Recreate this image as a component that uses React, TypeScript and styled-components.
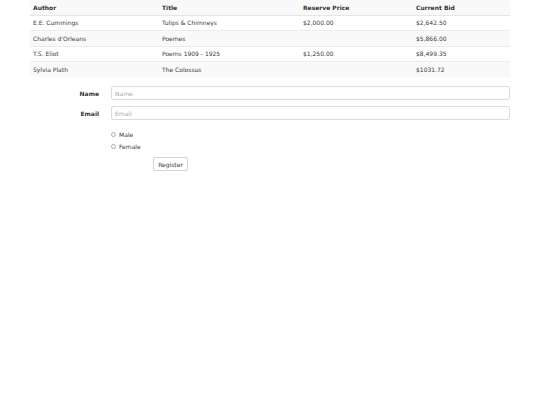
import React from "react";
import styled, { createGlobalStyle } from "styled-components";

const Global = createGlobalStyle`
  html, body { margin: 0; padding: 0; background: #fff; }
  body { font-family: "DejaVu Sans", Verdana, sans-serif; color: #333; font-size: 6px; }
`;

const Page = styled.div`
  padding: 0 30px;
  width: 480px;
`;

const Table = styled.table`
  width: 480px;
  border-collapse: collapse;
  table-layout: fixed;
`;

const Th = styled.th<{ $w: number }>`
  width: ${(p) => p.$w}px;
  text-align: left;
  font-weight: bold;
  padding: 0 3px;
  height: 15px;
  line-height: 9px;
  background: #f9f9f9;
  border-bottom: 1px solid #e6e6e6;
  box-sizing: border-box;
`;

const Tr = styled.tr<{ $striped: boolean }>`
  background: ${(p) => (p.$striped ? "#f9f9f9" : "#fff")};
`;

const Td = styled.td`
  padding: 0 3px;
  height: 15.5px;
  line-height: 9px;
  border-top: 1px solid #ececec;
  box-sizing: border-box;
  color: #3a3a3a;
`;

const Form = styled.div`
  margin-top: 9px;
  display: flex;
  flex-direction: column;
  gap: 6px;
`;

const Row = styled.div`
  display: grid;
  grid-template-columns: 69px 399px;
  column-gap: 12px;
  align-items: center;
`;

const Label = styled.label`
  text-align: right;
  font-weight: bold;
  color: #333;
`;

const Input = styled.input`
  box-sizing: border-box;
  height: 14px;
  width: 399px;
  border: 1px solid #dcdcdc;
  border-radius: 2px;
  padding: 0 3px;
  font-family: "DejaVu Sans", Verdana, sans-serif;
  font-size: 6px;
  outline: none;
  &::placeholder { color: #a8a8a8; }
`;

const Radios = styled.div`
  margin-left: 81px;
  margin-top: 4px;
  display: flex;
  flex-direction: column;
  gap: 3px;
`;

const RadioRow = styled.label`
  display: flex;
  align-items: center;
  gap: 3px;
  height: 9px;
  color: #3a3a3a;
`;

const Circle = styled.span`
  width: 5px;
  height: 5px;
  border: 0.8px solid #aaa;
  border-radius: 50%;
  box-sizing: border-box;
`;

const Button = styled.button`
  margin-left: 123px;
  margin-top: 0;
  width: 35px;
  height: 14px;
  box-sizing: border-box;
  background: #fff;
  border: 1px solid #d4d4d4;
  border-radius: 2px;
  font-family: "DejaVu Sans", Verdana, sans-serif;
  font-size: 6px;
  color: #3a3a3a;
  padding: 0;
`;

const rows = [
  ["E.E. Cummings", "Tulips & Chimneys", "$2,000.00", "$2,642.50"],
  ["Charles d'Orleans", "Poemes", "", "$5,866.00"],
  ["T.S. Eliot", "Poems 1909 - 1925", "$1,250.00", "$8,499.35"],
  ["Sylvia Plath", "The Colossus", "", "$1031.72"],
];

export default function App() {
  return (
    <>
      <Global />
      <Page>
        <Table>
          <thead>
            <tr>
              <Th $w={129}>Author</Th>
              <Th $w={141}>Title</Th>
              <Th $w={113}>Reserve Price</Th>
              <Th $w={97}>Current Bid</Th>
            </tr>
          </thead>
          <tbody>
            {rows.map((r, i) => (
              <Tr key={i} $striped={i % 2 === 1}>
                {r.map((c, j) => (
                  <Td key={j}>{c}</Td>
                ))}
              </Tr>
            ))}
          </tbody>
        </Table>
        <Form>
          <Row>
            <Label>Name</Label>
            <Input placeholder="Name" />
          </Row>
          <Row>
            <Label>Email</Label>
            <Input placeholder="Email" />
          </Row>
          <Radios>
            <RadioRow><Circle />Male</RadioRow>
            <RadioRow><Circle />Female</RadioRow>
          </Radios>
          <Button>Register</Button>
        </Form>
      </Page>
    </>
  );
}
